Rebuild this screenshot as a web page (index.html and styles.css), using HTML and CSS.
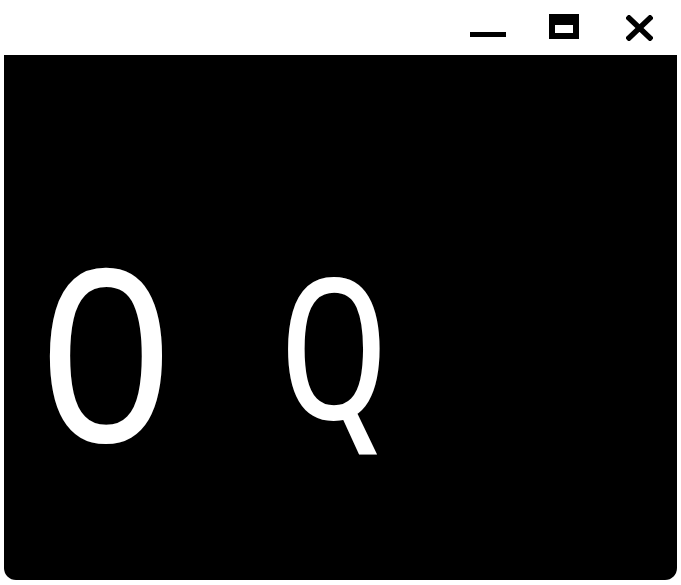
FILE: index.html
```html
<!DOCTYPE html>
<html>
<head>
<meta charset="utf-8">
<link rel="stylesheet" href="styles.css">
</head>
<body>
<div class="titlebar">
  <svg class="icon min" width="36" height="5" viewBox="0 0 36 5"><rect width="36" height="5" fill="#000"/></svg>
  <svg class="icon max" width="30" height="25" viewBox="0 0 30 25"><rect width="30" height="25" fill="#000"/><rect x="6" y="11" width="18" height="8" fill="#fff"/></svg>
  <svg class="icon close" width="27" height="26" viewBox="0 0 27 26"><path d="M3 3 L24 23 M24 3 L3 23" stroke="#000" stroke-width="5.5" stroke-linecap="square"/></svg>
</div>
<div class="panel">
  <span class="glyph big">O</span>
  <span class="glyph small">Q</span>
</div>
</body>
</html>
```
FILE: styles.css
```css
html, body {
  margin: 0;
  padding: 0;
  background: #fff;
}
body {
  width: 681px;
  height: 585px;
  overflow: hidden;
}
.titlebar {
  height: 55px;
  display: flex;
  justify-content: flex-end;
  align-items: flex-start;
  padding: 14px 28px 0 0;
  box-sizing: border-box;
}
.icon { display: block; }
.min { margin-top: 18px; }
.max { margin-left: 43px; }
.close { margin-left: 47px; margin-top: 1px; }
.panel {
  margin: 0 4px;
  height: 525px;
  background: #000;
  border-radius: 0 0 12px 12px;
  display: flex;
  align-items: flex-start;
  padding-left: 36px;
  box-sizing: border-box;
  color: #fff;
  font-family: "Noto Sans Mono", "Droid Sans Mono", monospace;
}
.glyph {
  line-height: 1;
  display: block;
  transform: scaleX(0.92);
  transform-origin: left center;
}
.big { font-size: 239px; margin-top: 175px; }
.small { font-size: 195px; margin-top: 191px; margin-left: 97px; }
```
